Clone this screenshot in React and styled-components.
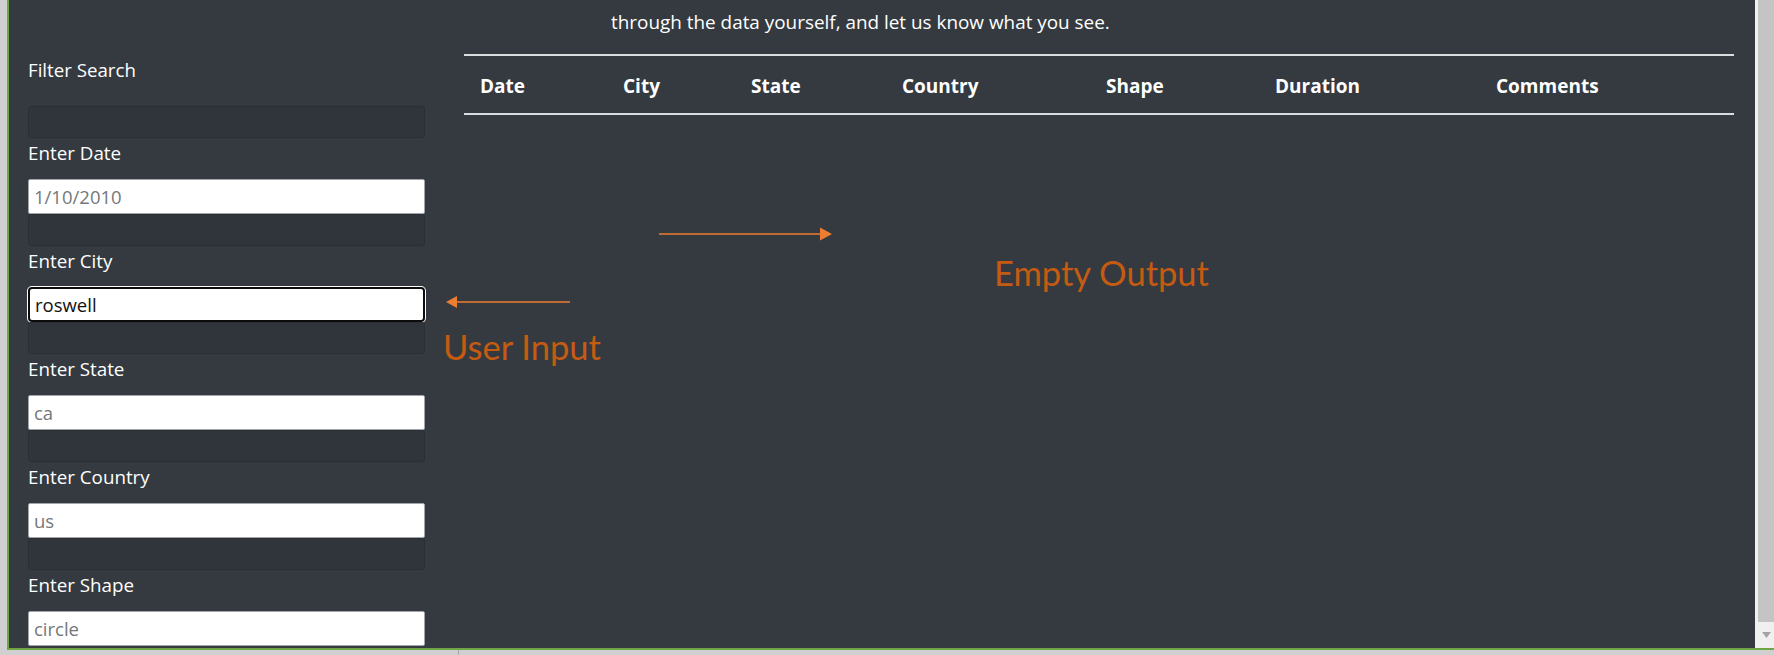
import React from 'react'
import styled, { createGlobalStyle } from 'styled-components'

const GlobalStyle = createGlobalStyle`
  html, body {
    margin: 0;
    padding: 0;
    background: #d0d0d0;
    overflow: hidden;
  }
`

const fields = [
  { id: 'datetime', label: 'Enter Date', placeholder: '1/10/2010' },
  { id: 'city', label: 'Enter City', value: 'roswell', focused: true },
  { id: 'state', label: 'Enter State', placeholder: 'ca' },
  { id: 'country', label: 'Enter Country', placeholder: 'us' },
  { id: 'shape', label: 'Enter Shape', placeholder: 'circle' },
]

const columns = [
  { title: 'Date', width: '143px' },
  { title: 'City', width: '128px' },
  { title: 'State', width: '151px' },
  { title: 'Country', width: '204px' },
  { title: 'Shape', width: '169px' },
  { title: 'Duration', width: '221px' },
  { title: 'Comments', width: '1fr' },
]

const Arrow = ({ dir }) => (
  <svg width="176" height="16" viewBox="0 0 176 16">
    {dir === 'left' ? (
      <>
        <line x1="10" y1="8" x2="124" y2="8" stroke="#ed7d31" strokeWidth="1.4" />
        <polygon points="0,8 11,2 11,14" fill="#ed7d31" />
      </>
    ) : (
      <>
        <line x1="0" y1="8" x2="164" y2="8" stroke="#ed7d31" strokeWidth="1.4" />
        <polygon points="173,8 161,1.5 161,14.5" fill="#ed7d31" />
      </>
    )}
  </svg>
)

export default function App() {
  return (
    <Frame>
      <GlobalStyle />
      <Window>
        <Page>
          <Sidebar>
            <SideTitle>Filter Search</SideTitle>
            {fields.map((f) => (
              <React.Fragment key={f.id}>
                <FilterBox />
                <Label htmlFor={f.id}>{f.label}</Label>
                <Input
                  id={f.id}
                  type="text"
                  readOnly
                  $focused={f.focused}
                  placeholder={f.placeholder}
                  value={f.value || ''}
                />
              </React.Fragment>
            ))}
          </Sidebar>
          <Main>
            <Lead>through the data yourself, and let us know what you see.</Lead>
            <TableHead $cols={columns.map((c) => c.width).join(' ')}>
              {columns.map((c) => (
                <Th key={c.title}>{c.title}</Th>
              ))}
            </TableHead>
          </Main>
        </Page>
        <Scrollbar>
          <Thumb />
          <ScrollButton>
            <svg width="9" height="6" viewBox="0 0 9 6">
              <polygon points="0,0 9,0 4.5,6" fill="#a3a3a3" />
            </svg>
          </ScrollButton>
        </Scrollbar>
      </Window>
      <BottomStrip>
        <EdgeLine />
      </BottomStrip>

      <Note $x={443} $y={329}>User Input</Note>
      <Note $x={994} $y={255}>Empty Output</Note>
      <ArrowWrap $x={446} $y={294}><Arrow dir="left" /></ArrowWrap>
      <ArrowWrap $x={659} $y={226}><Arrow dir="right" /></ArrowWrap>
    </Frame>
  )
}

const Frame = styled.div`
  position: relative;
  width: 1774px;
  height: 655px;
  background: #d0d0d0;
  display: flex;
  flex-direction: column;
  overflow: hidden;
`

const Window = styled.div`
  height: 650px;
  margin-left: 7px;
  display: flex;
  box-sizing: border-box;
  border-left: 2px solid #6fa544;
  border-bottom: 2px solid #6fa544;
`

const Page = styled.div`
  flex: 1;
  display: flex;
  background: #343a40;
  color: #ffffff;
  font-family: 'Open Sans', 'Liberation Sans', sans-serif;
  overflow: hidden;
`

const Sidebar = styled.div`
  width: 397px;
  flex-shrink: 0;
  padding: 55px 19px 0;
  display: flex;
  flex-direction: column;
`

const SideTitle = styled.div`
  font-size: 18.7px;
  line-height: 30px;
  margin-bottom: 21px;
`

const FilterBox = styled.div`
  height: 32px;
  box-sizing: border-box;
  background: #30353b;
  border: 1px solid #2b2f35;
  border-radius: 3px;
`

const Label = styled.label`
  display: block;
  font-size: 18.8px;
  line-height: 30px;
  margin: 0 0 11px;
`

const Input = styled.input`
  display: block;
  width: 100%;
  height: 35px;
  box-sizing: border-box;
  margin: 0;
  padding: 0 5px;
  background: #ffffff;
  color: #111111;
  font-family: 'Open Sans', 'Liberation Sans', sans-serif;
  font-size: 18.5px;
  border: ${(p) => (p.$focused ? '2px solid #0c0c0c' : '1px solid #a2a6aa')};
  border-radius: ${(p) => (p.$focused ? '4px' : '2px')};
  box-shadow: ${(p) => (p.$focused ? '0 0 0 1px #ffffff' : 'none')};
  outline: none;
  &::placeholder {
    color: #74787c;
  }
`

const Main = styled.div`
  flex: 1;
  padding: 7px 21px 0 20px;
  display: flex;
  flex-direction: column;
`

const Lead = styled.p`
  margin: 0 0 17px;
  padding-left: 147px;
  font-size: 18.9px;
  line-height: 30px;
`

const TableHead = styled.div`
  display: grid;
  grid-template-columns: ${(p) => p.$cols};
  border-top: 2px solid #dadde0;
  border-bottom: 2px solid #dadde0;
`

const Th = styled.div`
  padding: 15px 0 12px 16px;
  font-size: 19px;
  font-weight: 700;
  line-height: 30px;
`

const Scrollbar = styled.div`
  width: 19px;
  flex-shrink: 0;
  background: #f0f0f0;
  display: flex;
  flex-direction: column;
`

const Thumb = styled.div`
  flex: 1;
  margin-left: 3px;
  background: #c4c4c4;
`

const ScrollButton = styled.div`
  height: 26px;
  display: flex;
  align-items: center;
  justify-content: center;
  padding-left: 3px;
`

const BottomStrip = styled.div`
  flex: 1;
  display: flex;
`

const EdgeLine = styled.div`
  width: 1px;
  margin-left: 458px;
  background: #a8a8a8;
`

const Note = styled.div`
  position: absolute;
  left: ${(p) => p.$x}px;
  top: ${(p) => p.$y}px;
  font-family: Lato, 'Open Sans', sans-serif;
  font-size: 34.5px;
  line-height: 35px;
  color: #c55a11;
  white-space: nowrap;
`

const ArrowWrap = styled.div`
  position: absolute;
  left: ${(p) => p.$x}px;
  top: ${(p) => p.$y}px;
  line-height: 0;
`
